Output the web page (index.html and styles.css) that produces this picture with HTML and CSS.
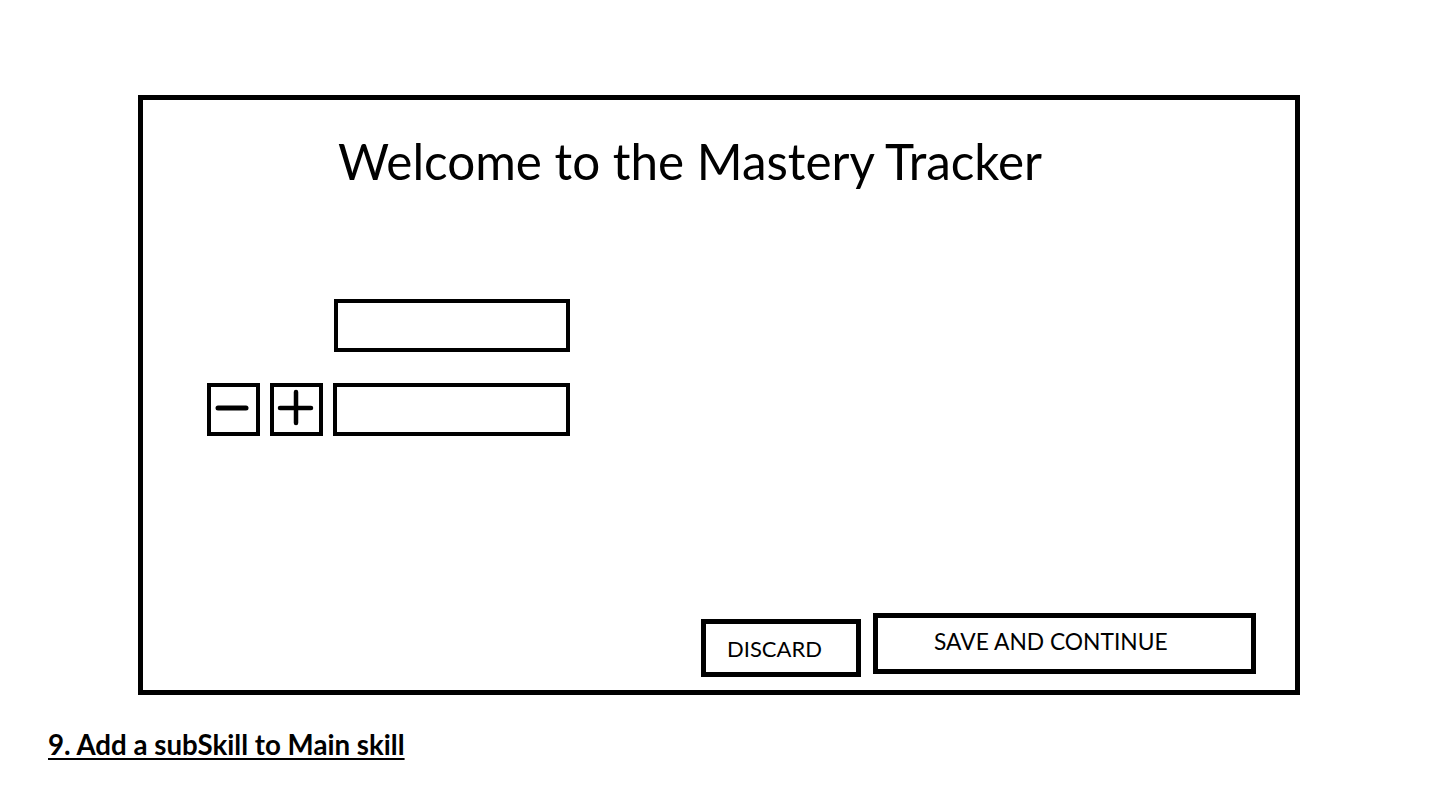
FILE: index.html
```html
<!DOCTYPE html>
<html lang="en">
<head>
<meta charset="utf-8">
<title>Mastery Tracker - Add subSkill</title>
<link rel="stylesheet" href="styles.css">
</head>
<body>
<main class="page">
  <section class="frame">
    <h1 class="title">Welcome to the Mastery Tracker</h1>
    <div class="form">
      <div class="field field-main"></div>
      <div class="icon-box">
        <svg width="45" height="45" viewBox="0 0 45 45"><line x1="7" y1="21" x2="35" y2="21" stroke="#000" stroke-width="5" stroke-linecap="round"/></svg>
      </div>
      <div class="icon-box">
        <svg width="45" height="45" viewBox="0 0 45 45"><line x1="6" y1="21" x2="37" y2="21" stroke="#000" stroke-width="4.5" stroke-linecap="round"/><line x1="22" y1="5" x2="22" y2="36" stroke="#000" stroke-width="4.5" stroke-linecap="round"/></svg>
      </div>
      <div class="field"></div>
    </div>
    <div class="actions">
      <div class="btn btn-discard">DISCARD</div>
      <div class="btn btn-save">SAVE AND CONTINUE</div>
    </div>
  </section>
  <p class="caption">9. Add a subSkill to Main skill</p>
</main>
</body>
</html>
```
FILE: styles.css
```css
html, body {
  margin: 0;
  padding: 0;
  background: #fff;
}
body {
  font-family: Lato, "Open Sans", sans-serif;
  color: #000;
}
.page {
  padding-top: 95px;
}
.frame {
  box-sizing: border-box;
  width: 1162px;
  height: 600px;
  margin-left: 138px;
  border: 5px solid #000;
  padding: 31px 39px 13px 64px;
  display: flex;
  flex-direction: column;
}
.title {
  margin: 0 0 0 131px;
  font-size: 49.4px;
  line-height: 60px;
  height: 60px;
  font-weight: 400;
}
.form {
  margin-top: 108px;
  display: grid;
  grid-template-columns: 53px 53px 237px;
  column-gap: 10px;
  row-gap: 31px;
}
.field {
  box-sizing: border-box;
  height: 53px;
  border: 4px solid #000;
}
.field-main {
  grid-column: 3;
  margin-left: 1px;
}
.icon-box {
  box-sizing: border-box;
  width: 53px;
  height: 53px;
  border: 4px solid #000;
}
.icon-box svg {
  display: block;
}
.actions {
  margin-top: auto;
  display: flex;
  justify-content: flex-end;
  align-items: flex-end;
  gap: 12px;
}
.btn {
  box-sizing: border-box;
  border: 5px solid #000;
  line-height: 26px;
}
.btn-discard {
  width: 160px;
  height: 58px;
  padding: 12px 0 0 21px;
  font-size: 22px;
}
.btn-save {
  width: 383px;
  height: 61px;
  margin-bottom: 3px;
  padding: 10px 0 0 56px;
  font-size: 22.8px;
}
.caption {
  margin: 34px 0 0 48px;
  font-size: 27.7px;
  line-height: 32px;
  font-weight: 700;
  text-decoration: underline;
  text-decoration-thickness: 2px;
  text-underline-offset: 3px;
}
```
